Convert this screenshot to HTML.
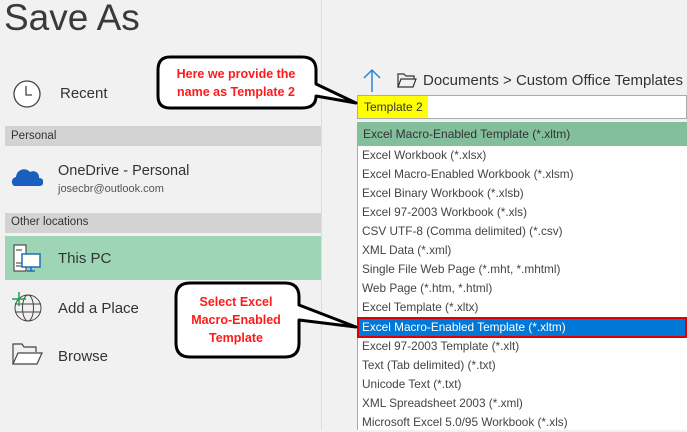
<!DOCTYPE html>
<html><head><meta charset="utf-8"><style>
*{margin:0;padding:0;box-sizing:border-box}
body{width:687px;height:430px;overflow:hidden;background:#f1f1f1;font-family:"Liberation Sans",sans-serif;position:relative;color:#333}
.a{position:absolute;white-space:nowrap}
.it{position:absolute;left:362px;font-size:11.8px;color:#444;height:19px;line-height:19px}
</style></head><body>
<div class="a" style="left:4px;top:-3px;font-size:37px;color:#3a3a3a">Save As</div>
<div class="a" style="left:321px;top:0;width:1px;height:430px;background:#dcdcdc"></div>
<svg class="a" style="left:12px;top:79px" width="30" height="30"><circle cx="15" cy="15" r="13" fill="#fff" stroke="#444" stroke-width="1.3"/><path d="M14 7v9h6" fill="none" stroke="#444" stroke-width="1.3"/></svg>
<div class="a" style="left:60px;top:85px;font-size:15px">Recent</div>
<div class="a" style="left:5px;top:126px;width:316px;height:20px;background:#d3d3d3;font-size:11.5px;padding:4px 0 0 6px">Personal</div>
<svg class="a" style="left:11px;top:164px" width="32" height="24"><path d="M3 22a5 5 0 0 1 2-9a8 8 0 0 1 14-5a6 6 0 0 1 9 6a4 4 0 0 1 1 8z" fill="#1b5fbe"/></svg>
<div class="a" style="left:58px;top:163px;font-size:14.5px;color:#333">OneDrive - Personal</div>
<div class="a" style="left:58px;top:183px;font-size:11px;color:#555">josecbr@outlook.com</div>
<div class="a" style="left:5px;top:213px;width:316px;height:20px;background:#d3d3d3;font-size:11.5px;padding:3px 0 0 6px">Other locations</div>
<div class="a" style="left:5px;top:236px;width:316px;height:44px;background:#9fd5b7"></div>
<svg class="a" style="left:12px;top:243px" width="32" height="32"><rect x="2" y="2" width="12" height="26" fill="#fff" stroke="#333"/><path d="M4 7h6M4 20h6M4 23h6" stroke="#333"/><rect x="10" y="11" width="18" height="13" fill="#fff" stroke="#1f6fb5" stroke-width="1.5"/><path d="M19 24v4M15 28h8" stroke="#1f6fb5" stroke-width="1.5"/></svg>
<div class="a" style="left:58px;top:250px;font-size:15px">This PC</div>
<svg class="a" style="left:10px;top:290px" width="34" height="34"><circle cx="18" cy="18" r="13" fill="none" stroke="#444"/><ellipse cx="18" cy="18" rx="5.5" ry="13" fill="none" stroke="#444"/><path d="M5 14h26M5 22h26" stroke="#444"/><path d="M9 2v14M2 9h14" stroke="#1aa34a" stroke-width="1.5"/></svg>
<div class="a" style="left:58px;top:300px;font-size:15px">Add a Place</div>
<svg class="a" style="left:12px;top:342px" width="32" height="24"><path d="M1 22V2h9l2 3h12v5" fill="none" stroke="#444" stroke-width="1.2"/><path d="M1 22l5-11h24l-5 11z" fill="#fff" stroke="#444" stroke-width="1.2"/></svg>
<div class="a" style="left:58px;top:348px;font-size:15px">Browse</div>

<svg class="a" style="left:362px;top:68px" width="20" height="24"><path d="M10 2v22M2 10l8-8 8 8" fill="none" stroke="#2c86d6" stroke-width="1.5"/></svg>
<svg class="a" style="left:397px;top:73px" width="20" height="16"><path d="M1 14V1h6l2 2h8v3" fill="none" stroke="#333" stroke-width="1.2"/><path d="M1 14l3-8h15l-3 8z" fill="none" stroke="#333" stroke-width="1.2"/></svg>
<div class="a" style="left:423px;top:72px;font-size:15px;color:#333">Documents &gt; Custom Office Templates</div>
<div class="a" style="left:357px;top:95px;width:330px;height:24px;background:#fff;border:1px solid #aaa"></div>
<div class="a" style="left:358px;top:96px;width:70px;height:22px;background:#ffff00;font-size:12px;color:#333;padding:4px 0 0 6px">Template 2</div>
<div class="a" style="left:357px;top:122px;width:330px;height:24px;background:#84bf9c;font-size:12px;color:#333;padding:5px 0 0 6px">Excel Macro-Enabled Template (*.xltm)</div>
<div class="a" style="left:357px;top:146px;width:330px;height:284px;background:#fff;border-left:1px solid #aaa"></div>
<div class="it" style="top:146px">Excel Workbook (*.xlsx)</div>
<div class="it" style="top:165px">Excel Macro-Enabled Workbook (*.xlsm)</div>
<div class="it" style="top:184px">Excel Binary Workbook (*.xlsb)</div>
<div class="it" style="top:203px">Excel 97-2003 Workbook (*.xls)</div>
<div class="it" style="top:222px">CSV UTF-8 (Comma delimited) (*.csv)</div>
<div class="it" style="top:241px">XML Data (*.xml)</div>
<div class="it" style="top:260px">Single File Web Page (*.mht, *.mhtml)</div>
<div class="it" style="top:279px">Web Page (*.htm, *.html)</div>
<div class="it" style="top:298px">Excel Template (*.xltx)</div>
<div class="a" style="left:357px;top:317px;width:330px;height:21px;background:#0078d7;border:2px solid #e00000"></div>
<div class="it" style="top:318px;color:#fff">Excel Macro-Enabled Template (*.xltm)</div>
<div class="it" style="top:337px">Excel 97-2003 Template (*.xlt)</div>
<div class="it" style="top:356px">Text (Tab delimited) (*.txt)</div>
<div class="it" style="top:375px">Unicode Text (*.txt)</div>
<div class="it" style="top:394px">XML Spreadsheet 2003 (*.xml)</div>
<div class="it" style="top:413px">Microsoft Excel 5.0/95 Workbook (*.xls)</div>

<svg class="a" style="left:0;top:0" width="687" height="430">
<g stroke="#000" stroke-width="3" fill="#fff" stroke-linejoin="round">
<path d="M170 57H302Q316 57 316 70V84L356 103L316 96V96Q316 108 302 108H170Q158 108 158 96V70Q158 57 170 57Z"/>
<path d="M190 283H285Q299 283 299 297V305L356 327L299 320V343Q299 357 285 357H190Q176 357 176 343V297Q176 283 190 283Z"/>
</g>
<g fill="#ff1a1a" font-family="Liberation Sans, sans-serif" font-weight="bold" font-size="12.5" text-anchor="middle">
<text x="236" y="78">Here we provide the</text>
<text x="236" y="96">name as Template 2</text>
<text x="236" y="306">Select Excel</text>
<text x="236" y="324">Macro-Enabled</text>
<text x="236" y="342">Template</text>
</g>
</svg>
</body></html>
